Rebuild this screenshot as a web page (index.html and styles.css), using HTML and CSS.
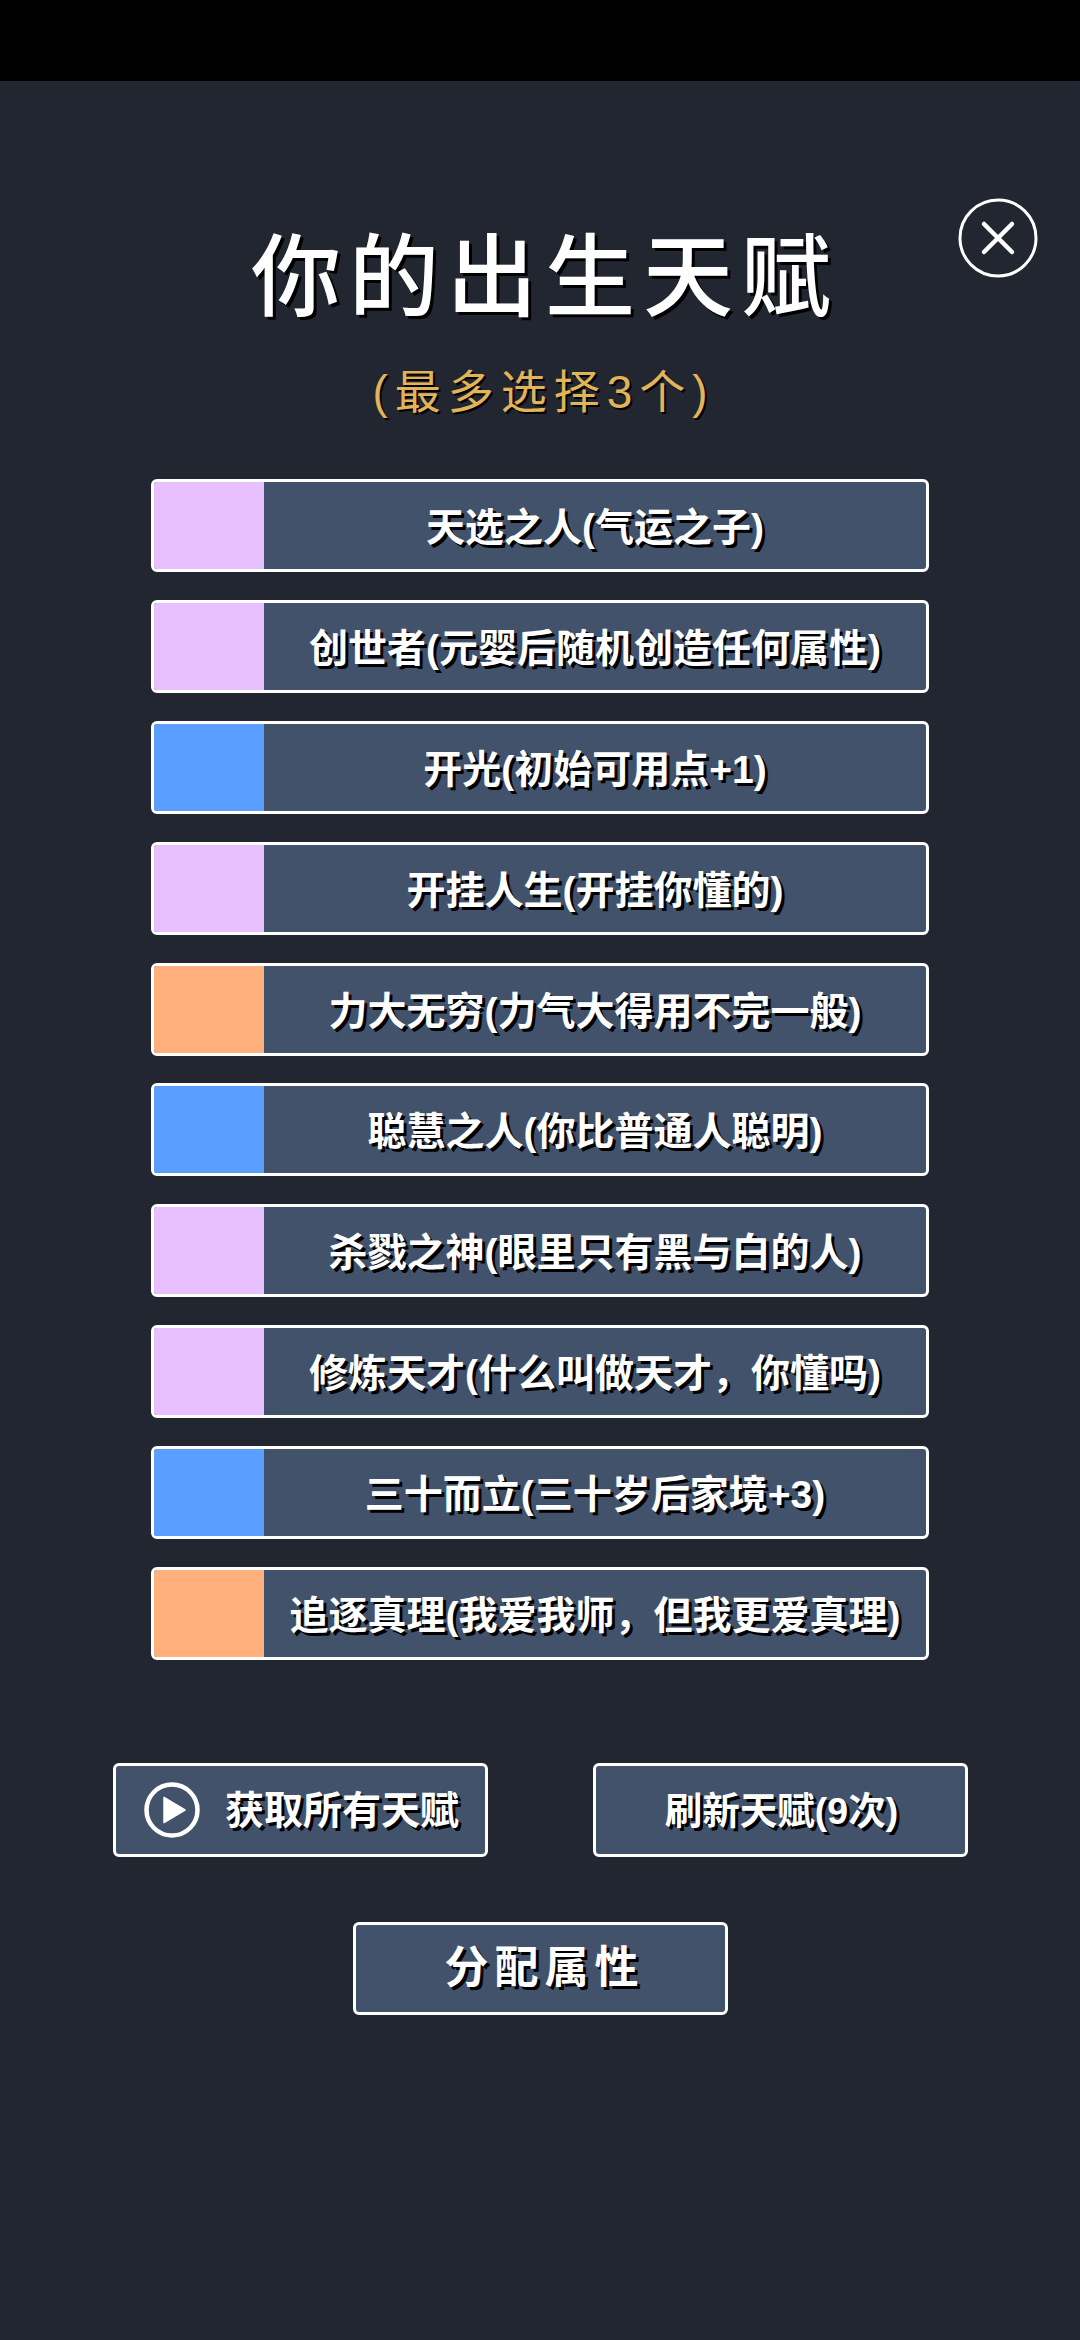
FILE: index.html
```html
<!DOCTYPE html>
<html lang="zh-CN">
<head>
<meta charset="utf-8">
<title>你的出生天赋</title>
<link rel="stylesheet" href="styles.css">
</head>
<body>
<div class="status"></div>
<main class="screen">
  <button class="close" aria-label="关闭">
    <svg width="80" height="80" viewBox="0 0 80 80"><circle cx="40" cy="40" r="38" fill="none" stroke="#fff" stroke-width="3"/><path d="M26 26L54 54M54 26L26 54" stroke="#fff" stroke-width="4.500" stroke-linecap="round"/></svg>
  </button>
  <h1 class="title">你的出生天赋</h1>
  <p class="subtitle">(最多选择3个)</p>
  <ul class="list">
    <li class="row"><span class="swatch purple"></span><span class="label">天选之人(气运之子)</span></li>
    <li class="row"><span class="swatch purple"></span><span class="label">创世者(元婴后随机创造任何属性)</span></li>
    <li class="row"><span class="swatch blue"></span><span class="label">开光(初始可用点+1)</span></li>
    <li class="row"><span class="swatch purple"></span><span class="label">开挂人生(开挂你懂的)</span></li>
    <li class="row"><span class="swatch orange"></span><span class="label">力大无穷(力气大得用不完一般)</span></li>
    <li class="row"><span class="swatch blue"></span><span class="label">聪慧之人(你比普通人聪明)</span></li>
    <li class="row"><span class="swatch purple"></span><span class="label">杀戮之神(眼里只有黑与白的人)</span></li>
    <li class="row"><span class="swatch purple"></span><span class="label">修炼天才(什么叫做天才，你懂吗)</span></li>
    <li class="row"><span class="swatch blue"></span><span class="label">三十而立(三十岁后家境+3)</span></li>
    <li class="row"><span class="swatch orange"></span><span class="label">追逐真理(我爱我师，但我更爱真理)</span></li>
  </ul>
  <div class="actions">
    <button class="btn btn-icon">
      <svg width="56" height="56" viewBox="0 0 56 56"><circle cx="28" cy="28" r="25.500" fill="none" stroke="#fff" stroke-width="4.500"/><path d="M20 15.500L41 28L20 40.500Z" fill="#fff" stroke="#fff" stroke-width="1.500" stroke-linejoin="round"/></svg>
      <span>获取所有天赋</span>
    </button>
    <button class="btn btn-refresh">刷新天赋(9次)</button>
  </div>
  <button class="btn btn-main">分配属性</button>
</main>
</body>
</html>
```
FILE: styles.css
```css
* { box-sizing: border-box; }
html, body { margin: 0; padding: 0; }
body {
  width: 1080px;
  height: 2340px;
  overflow: hidden;
  background: #222631;
  color: #fff;
  font-family: "Liberation Sans", "Noto Sans CJK SC", sans-serif;
}
.status { height: 81px; background: #000; }
.screen {
  position: relative;
  display: flex;
  flex-direction: column;
  align-items: center;
  height: 2259px;
  padding-top: 138px;
}
.close {
  position: absolute;
  left: 958px;
  top: 117px;
  width: 80px;
  height: 80px;
  padding: 0;
  border: 0;
  background: none;
  display: block;
}
.close svg { display: block; }
.title {
  margin: 0;
  height: 118px;
  padding-left: 10px;
  font-size: 90px;
  line-height: 118px;
  font-weight: 500;
  letter-spacing: 8px;
  text-shadow: 3px 3px 0 #000;
}
.subtitle {
  margin: 20px 0 0;
  height: 70px;
  padding-left: 7px;
  font-size: 46px;
  line-height: 70px;
  letter-spacing: 7px;
  color: #e2b458;
  text-shadow: 2px 2px 0 #000;
}
.list {
  list-style: none;
  margin: 52px 0 0;
  padding: 0;
  width: 778px;
  display: flex;
  flex-direction: column;
  gap: 27.900px;
}
.row {
  display: flex;
  height: 93px;
  background: #42526a;
  border: 3px solid #fff;
  border-radius: 6px;
  overflow: hidden;
}
.swatch { flex: none; width: 110px; }
.purple { background: #e8c0ff; }
.blue { background: #5a9eff; }
.orange { background: #ffb07c; }
.label {
  flex: 1;
  padding-top: 4px;
  text-align: center;
  font-size: 39px;
  line-height: 84px;
  font-weight: 700;
  white-space: nowrap;
  text-shadow: 3px 3px 0 #000;
}
.actions {
  display: flex;
  justify-content: space-between;
  width: 855px;
  margin-top: 103px;
}
.btn {
  display: flex;
  align-items: center;
  justify-content: center;
  width: 375px;
  height: 94px;
  padding: 0 0 6px 3px;
  background: #42526a;
  border: 3px solid #fff;
  border-radius: 6px;
  color: #fff;
  font-family: inherit;
  font-size: 39px;
  font-weight: 700;
  text-shadow: 3px 3px 0 #000;
}
.btn-icon { gap: 25px; }
.btn-icon svg { margin-top: 6px; }
.btn-refresh { font-size: 37.500px; }
.btn-main {
  margin-top: 65px;
  height: 93px;
  padding: 0 0 9px 9px;
  font-size: 44px;
  letter-spacing: 6px;
}
```
